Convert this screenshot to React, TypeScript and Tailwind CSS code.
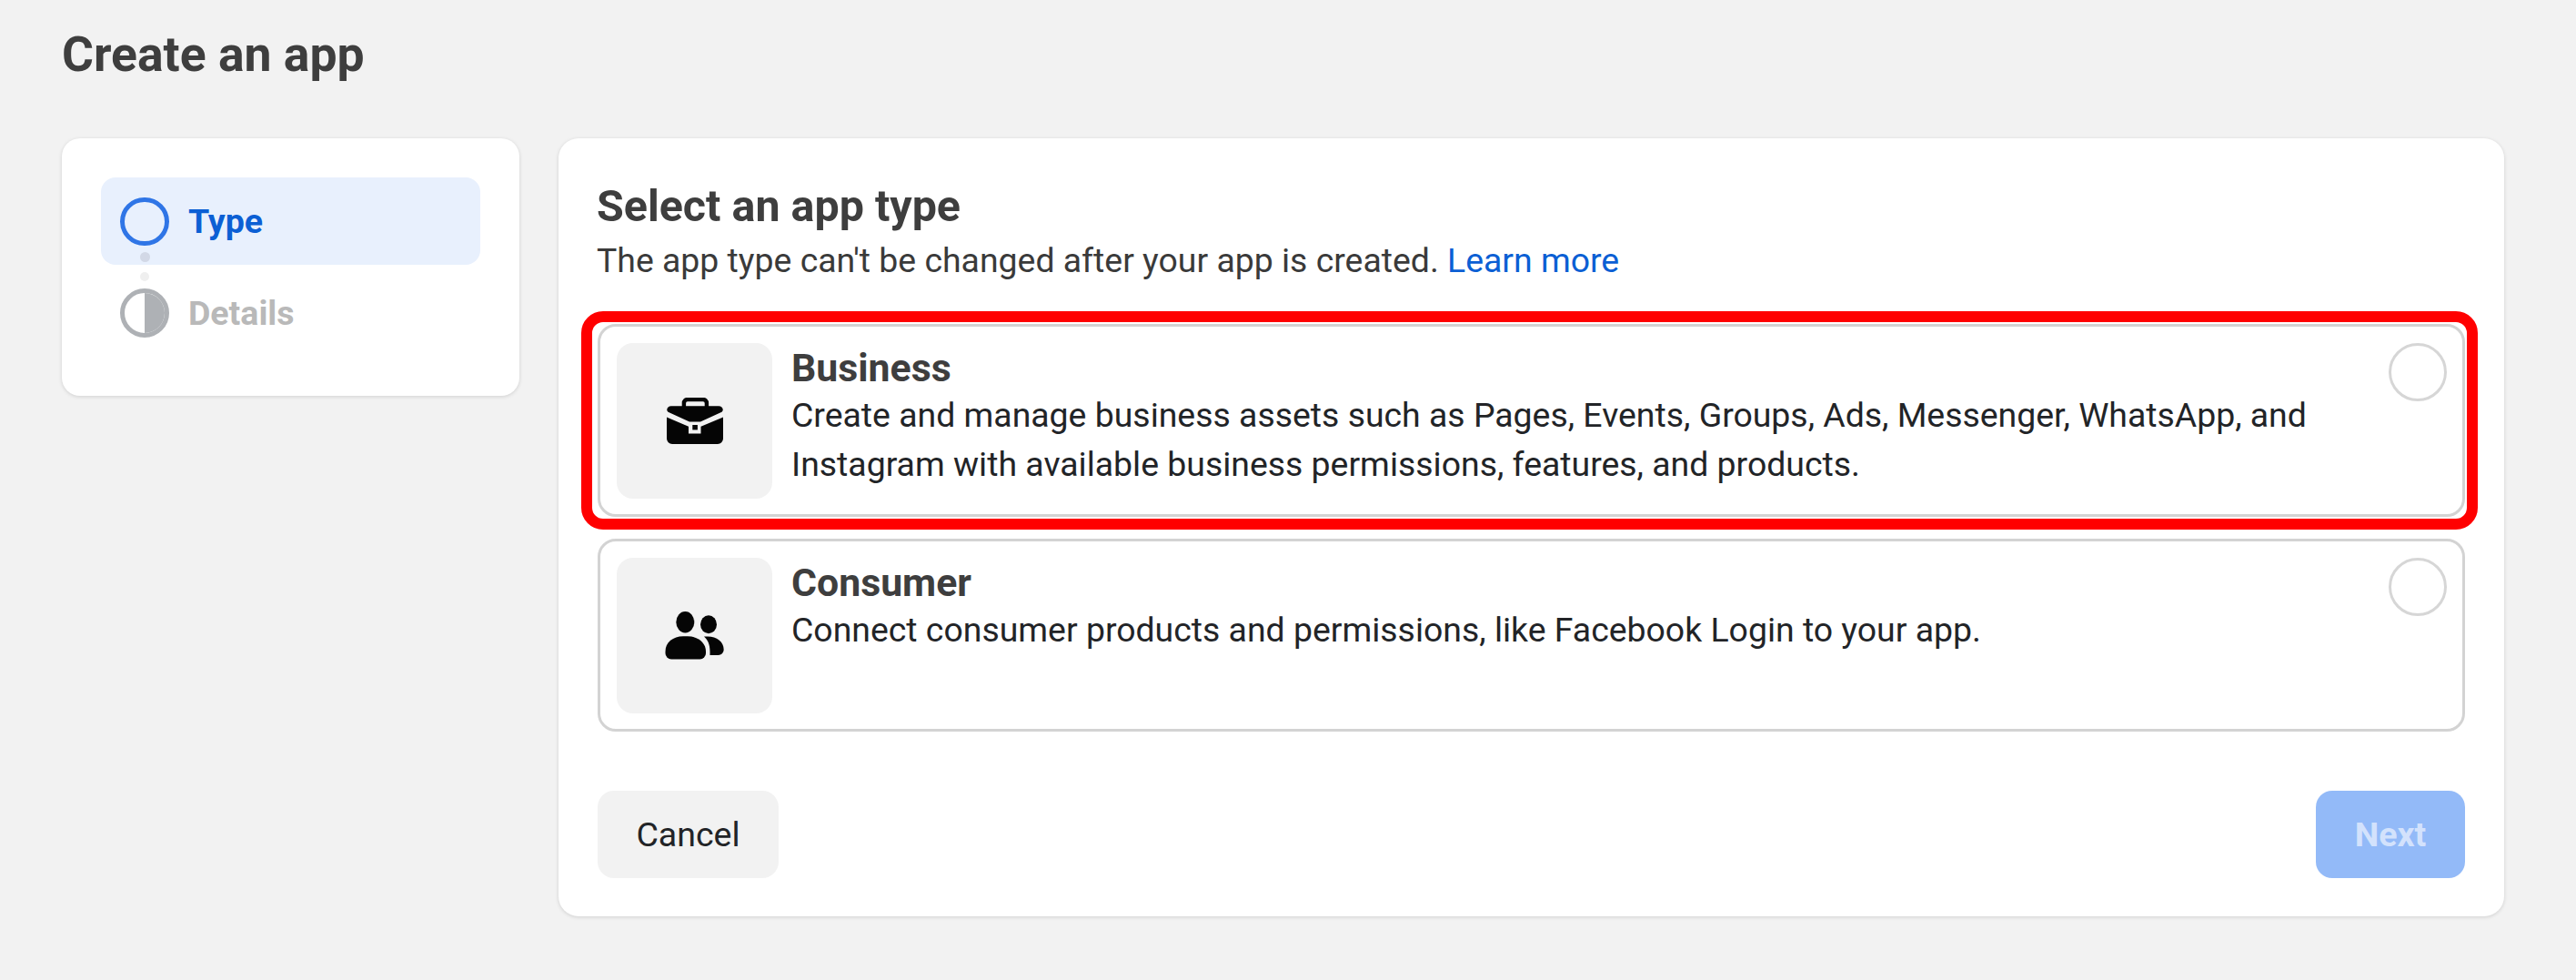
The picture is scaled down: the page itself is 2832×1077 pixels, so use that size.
const roboto = { fontFamily: 'Roboto, sans-serif' };

const BriefcaseIcon = () => (
  <svg width="62" height="51" viewBox="0 0 62 51" fill="#050505">
    <path d="M18.9 10V6a4 4 0 0 1 4-4h17a4 4 0 0 1 4 4v4" fill="none" stroke="#050505" strokeWidth="4.4" />
    <path d="M5 9.3h52c4.2 0 6.6 4.7 3 6.8L37 26.5H25L2 16.1C-1.6 14 .8 9.3 5 9.3Z" />
    <path d="M0 21.5l24 10.3v7.7h13.5v-7.7L62 21.5V45a6 6 0 0 1-6 6H6a6 6 0 0 1-6-6Z" />
    <rect x="28.3" y="30" width="5.6" height="5.4" />
  </svg>
);

const PeopleIcon = () => (
  <svg width="65" height="53" viewBox="0 0 65 53" fill="#050505">
    <ellipse cx="22.3" cy="11.7" rx="10" ry="11.7" />
    <path d="M.5 44C.5 34 9 27.3 20 27.3h5C36 27.3 45 34 45 44v2a6.5 6.5 0 0 1-6.5 6.5H7A6.5 6.5 0 0 1 .5 46Z" />
    <ellipse cx="48" cy="14.3" rx="9" ry="10" />
    <path d="M43 27.5h4c10 0 17.7 5.5 17.7 14.5a6 6 0 0 1-6 6H49.5v-4C49.5 36 47 31 43 27.5Z" />
  </svg>
);

const TypeOption = ({
  icon,
  title,
  lines,
  selected,
}: {
  icon: React.ReactNode;
  title: string;
  lines: string[];
  selected?: boolean;
}) => (
  <div className="relative flex h-[212px] gap-[21px] rounded-[20px] border-[3px] border-[#d3d3d3] bg-white pl-[18px] pr-[17px] pt-[18px]">
    <div className="flex h-[171px] w-[171px] shrink-0 items-center justify-center rounded-[18px] bg-[#f2f2f2]">{icon}</div>
    <div className="flex-1">
      <div className="mt-[2px] text-[42.8px] font-bold leading-[50px] text-[#3e3e3e]">{title}</div>
      <div className="mt-[1px]">
        {lines.map((line) => (
          <div key={line} className="text-[37.4px] leading-[53.5px] text-[#222427]">
            {line}
          </div>
        ))}
      </div>
    </div>
    <div className="h-[64px] w-[64px] shrink-0 rounded-full border-[3px] border-[#d6d6d6] bg-white" />
    {selected && (
      <div className="absolute bottom-[-17px] left-[-21px] right-[-17px] top-[-17px] rounded-[24px] border-[12px] border-[#ff0000]" />
    )}
  </div>
);

export default function App() {
  return (
    <div className="h-[1077px] w-[2832px] overflow-hidden bg-[#f2f2f2]" style={roboto}>
      <h1 className="pl-[68px] pt-[28px] text-[53.5px] font-bold leading-[64px] text-[#3e3e3e]">Create an app</h1>

      <div className="mt-[60px] flex items-start gap-[43px] pl-[68px]">
        <div className="h-[283px] w-[503px] rounded-[20px] bg-white px-[43px] pt-[43px] shadow-[0_1px_4px_rgba(0,0,0,0.14)]">
          <div className="flex h-[96px] items-center gap-[21px] rounded-[16px] bg-[#e8f0fd] pl-[21px]">
            <div className="h-[53px] w-[54px] rounded-full border-[5px] border-[#2f75e6]" />
            <span className="text-[37.5px] font-bold text-[#0b5fd4]">Type</span>
          </div>
          <div className="ml-[43px] mt-[-14px] h-[11px] w-[11px] rounded-full bg-[#d2d8e6]" />
          <div className="ml-[43px] mt-[11px] h-[10px] w-[10px] rounded-full bg-[#efefef]" />
          <div className="mt-[8px] flex h-[54px] items-center gap-[21px] pl-[21px]">
            <div className="flex h-[54px] w-[54px] justify-end overflow-hidden rounded-full border-[5px] border-[#aeb1b5]">
              <div className="h-full w-1/2 bg-[#aeb1b5]" />
            </div>
            <span className="text-[37.5px] font-bold text-[#b9b9b9]">Details</span>
          </div>
        </div>

        <div className="h-[855px] w-[2139px] rounded-[22px] bg-white px-[43px] pt-[46px] shadow-[0_1px_4px_rgba(0,0,0,0.14)]">
          <h2 className="ml-[-1px] text-[48.4px] font-bold leading-[58px] text-[#3e3e3e]">Select an app type</h2>
          <p className="ml-[-1px] mt-[4px] text-[37.4px] leading-[52px] text-[#3a3a3a]">
            The app type can't be changed after your app is created.{' '}
            <span className="text-[#0b5fd4]">Learn more</span>
          </p>
          <div className="mt-[44px] flex flex-col gap-[24px]">
            <TypeOption
              icon={<BriefcaseIcon />}
              title="Business"
              selected
              lines={[
                'Create and manage business assets such as Pages, Events, Groups, Ads, Messenger, WhatsApp, and',
                'Instagram with available business permissions, features, and products.',
              ]}
            />
            <TypeOption
              icon={<PeopleIcon />}
              title="Consumer"
              lines={['Connect consumer products and permissions, like Facebook Login to your app.']}
            />
          </div>
          <div className="mt-[65px] flex items-center justify-between">
            <button className="h-[96px] w-[199px] rounded-[18px] bg-[#f2f2f2] text-[37.5px] text-[#222427]">Cancel</button>
            <button className="h-[96px] w-[164px] rounded-[18px] bg-[#93baf8] text-[37.5px] font-bold text-[#d3e2fc]">Next</button>
          </div>
        </div>
      </div>
    </div>
  );
}
